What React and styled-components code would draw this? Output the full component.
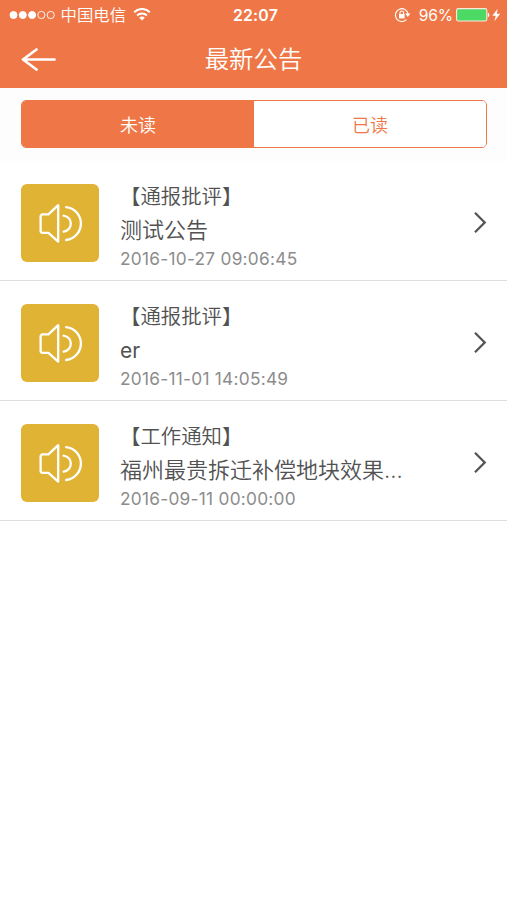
import React, { useState } from "react";
import styled, { createGlobalStyle, css } from "styled-components";

const GlobalStyle = createGlobalStyle`
  :root {
    --color-main: #ef7747;
    --color-white: #ffffff;
    --color-icon: #e0b335;
    --color-darkgray: #525252;
    --color-gray: #8c8c8c;
    --color-line: #dedede;
  }
  * {
    box-sizing: border-box;
  }
  body {
    margin: 0;
    background-color: var(--color-white);
    font-family: Inter, "Noto Sans CJK SC", sans-serif;
  }
`;

const Page = styled.div`
  width: 100%;
  min-height: 900px;
  background-color: var(--color-white);
`;

const Header = styled.header`
  height: 88px;
  color: var(--color-white);
  background-color: var(--color-main);
`;

const StatusBar = styled.div`
  display: grid;
  grid-template-columns: 1fr auto 1fr;
  grid-template-rows: 30px;
  align-items: center;
  height: 30px;
  padding: 0 5px 0 9px;
  font-size: 16.4px;
  line-height: 28px;
`;

const StatusGroup = styled.div`
  display: flex;
  align-items: center;
  justify-content: ${(props) => (props.$end ? "flex-end" : "flex-start")};
  height: 30px;
`;

const Carrier = styled.span`
  margin: 0 7px 0 4.5px;
  font-weight: 350;
`;

const Clock = styled.span`
  padding-top: 1px;
  font-size: 15.8px;
  font-weight: 600;
  letter-spacing: 0.2px;
`;

const Percent = styled.span`
  margin: 0 3px 0 8px;
  padding-top: 1px;
  font-size: 15.6px;
  letter-spacing: -0.1px;
`;

const NavBar = styled.div`
  display: grid;
  grid-template-columns: 60px 1fr 60px;
  align-items: center;
  height: 58px;
`;

const BackBtn = styled.button`
  display: flex;
  height: 58px;
  padding: 0 0 0 21px;
  align-items: center;
  border: 0;
  background: none;
  color: inherit;
`;

const PageTitle = styled.h1`
  margin: 0;
  font-size: 24.4px;
  font-weight: 350;
  line-height: 56px;
  text-align: center;
`;

const TabArea = styled.div`
  height: 73px;
  padding: 12px 20px 0 21px;
  background-color: #fdfdfd;
`;

const Tabs = styled.div`
  display: flex;
  height: 48px;
  border: 1.5px solid var(--color-main);
  border-radius: 5px;
  overflow: hidden;
  background-color: var(--color-white);
`;

const Tab = styled.button`
  flex: 1;
  padding: 2px 0 0;
  border: 0;
  font-family: inherit;
  font-size: 18px;
  font-weight: 350;
  line-height: 46px;
  ${(props) =>
    props.$active
      ? css`
          color: var(--color-white);
          background-color: var(--color-main);
        `
      : css`
          color: var(--color-main);
          background-color: var(--color-white);
        `};
`;

const List = styled.ul`
  margin: 0;
  padding: 0;
  list-style: none;
`;

const Item = styled.li`
  display: flex;
  align-items: flex-start;
  height: 120px;
  padding: 23px 20px 0 21px;
  border-bottom: 1px solid var(--color-line);
`;

const IconBox = styled.div`
  display: flex;
  flex: none;
  align-items: center;
  justify-content: center;
  width: 78px;
  height: 78px;
  border-radius: 6px;
  background-color: var(--color-icon);
`;

const Contents = styled.div`
  width: 300px;
  margin-left: 21px;
  color: var(--color-darkgray);
`;

const Category = styled.div`
  height: 28px;
  margin-top: -1px;
  font-size: 20.4px;
  font-weight: 350;
  line-height: 28px;
`;

const Title = styled.div`
  height: 38px;
  padding-top: ${(props) => (props.$latin ? "1px" : "0")};
  font-size: ${(props) => (props.$latin ? "21px" : "22px")};
  font-weight: ${(props) => (props.$latin ? 400 : 350)};
  line-height: 38px;
  white-space: nowrap;
`;

const DateText = styled.div`
  height: 20px;
  margin-top: -1px;
  color: var(--color-gray);
  font-size: 17.3px;
  letter-spacing: 0.26px;
  line-height: 21px;
`;

const ArrowBox = styled.div`
  display: flex;
  align-items: center;
  height: 78px;
  margin-left: auto;
`;

const SignalIcon = () => (
  <svg width="47" height="10" viewBox="0 0 47 10" fill="#fff" stroke="#fff">
    <circle cx="4.5" cy="5" r="3.5" />
    <circle cx="13.8" cy="5" r="3.5" />
    <circle cx="23.1" cy="5" r="3.5" />
    <circle cx="32.4" cy="5" r="3.6" fill="none" strokeWidth="0.9" />
    <circle cx="41.7" cy="5" r="3.6" fill="none" strokeWidth="0.9" />
  </svg>
);

const WifiIcon = () => (
  <svg width="18" height="14" viewBox="0 0 18 14" fill="none" stroke="#fff" strokeWidth="2">
    <path d="M1.2 4.2a11 11 0 0 1 15.6 0" />
    <path d="M4.1 7.5a6.9 6.9 0 0 1 9.8 0" />
    <path d="M9 12.6 6.2 9.8a4 4 0 0 1 5.6 0Z" fill="#fff" stroke="none" />
  </svg>
);

const LockIcon = () => (
  <svg width="17" height="16" viewBox="0 0 17 16" fill="none" stroke="#fff">
    <path d="M12.4 12.6a6.4 6.4 0 1 1 1.7-5.6" strokeWidth="1.2" />
    <path d="M11.2 6.6h5.2l-2.6 3.4Z" fill="#fff" stroke="none" />
    <rect x="5" y="7" width="5.6" height="4.4" fill="#fff" stroke="none" />
    <path d="M6 7.2V5.8a1.8 1.8 0 0 1 3.6 0v1.4" strokeWidth="1.1" />
  </svg>
);

const BatteryIcon = () => (
  <svg width="34" height="14" viewBox="0 0 34 14">
    <rect x="0.6" y="0.6" width="30.2" height="12.4" rx="1.8" fill="#4cd964" stroke="#ffe9df" strokeWidth="1.1" />
    <path d="M31.8 4.5a2.6 2.6 0 0 1 0 4.8Z" fill="#fff" />
  </svg>
);

const BoltIcon = () => (
  <svg width="12" height="14" viewBox="0 0 12 14" fill="#fff">
    <path d="M7.6 .8 2.4 7.8h3.4L4.4 13.2 10.2 5.8H6.8Z" />
  </svg>
);

const BackIcon = () => (
  <svg width="36" height="24" viewBox="0 0 36 24" fill="none" stroke="#fff" strokeWidth="2.7" strokeLinecap="round" strokeLinejoin="round">
    <path d="M15.5 2.5 2 12.5l13.5 10M2 12.5h31.5" />
  </svg>
);

const SpeakerIcon = () => (
  <svg width="48" height="40" viewBox="0 0 48 40" fill="none" stroke="#fff" strokeWidth="2.3" strokeLinecap="round" strokeLinejoin="round">
    <path d="M4.6 13.4a2 2 0 0 1 2-2h5.8L22.2 2.2v36.4L12.4 29.8H6.6a2 2 0 0 1-2-2Z" />
    <path d="M27.6 12.6c9.6 1.6 9.6 14.4 0 16" />
    <path d="M30.2 4.2a16.5 16.5 0 0 1 0 32.8" />
  </svg>
);

const ArrowIcon = () => (
  <svg width="14" height="24" viewBox="0 0 14 24" fill="none" stroke="#555" strokeWidth="2.3">
    <path d="m2 1.8 9.7 9.7L2 21.3" />
  </svg>
);

const notices = [
  { category: "【通报批评】", title: "测试公告", date: "2016-10-27 09:06:45" },
  { category: "【通报批评】", title: "er", date: "2016-11-01 14:05:49" },
  { category: "【工作通知】", title: "福州最贵拆迁补偿地块效果...", date: "2016-09-11 00:00:00" },
];

const NoticeItem = ({ notice }) => (
  <Item>
    <IconBox>
      <SpeakerIcon />
    </IconBox>
    <Contents>
      <Category>{notice.category}</Category>
      <Title $latin={/^\w+$/.test(notice.title)}>{notice.title}</Title>
      <DateText>{notice.date}</DateText>
    </Contents>
    <ArrowBox>
      <ArrowIcon />
    </ArrowBox>
  </Item>
);

const App = () => {
  const [tab, setTab] = useState("unread");
  return (
    <Page>
      <GlobalStyle />
      <Header>
        <StatusBar>
          <StatusGroup>
            <SignalIcon />
            <Carrier>中国电信</Carrier>
            <WifiIcon />
          </StatusGroup>
          <Clock>22:07</Clock>
          <StatusGroup $end>
            <LockIcon />
            <Percent>96%</Percent>
            <BatteryIcon />
            <BoltIcon />
          </StatusGroup>
        </StatusBar>
        <NavBar>
          <BackBtn>
            <BackIcon />
          </BackBtn>
          <PageTitle>最新公告</PageTitle>
        </NavBar>
      </Header>
      <TabArea>
        <Tabs>
          <Tab $active={tab === "unread"} onClick={() => setTab("unread")}>
            未读
          </Tab>
          <Tab $active={tab === "read"} onClick={() => setTab("read")}>
            已读
          </Tab>
        </Tabs>
      </TabArea>
      <List>
        {notices.map((notice) => (
          <NoticeItem key={notice.date} notice={notice} />
        ))}
      </List>
    </Page>
  );
};

export default App;
